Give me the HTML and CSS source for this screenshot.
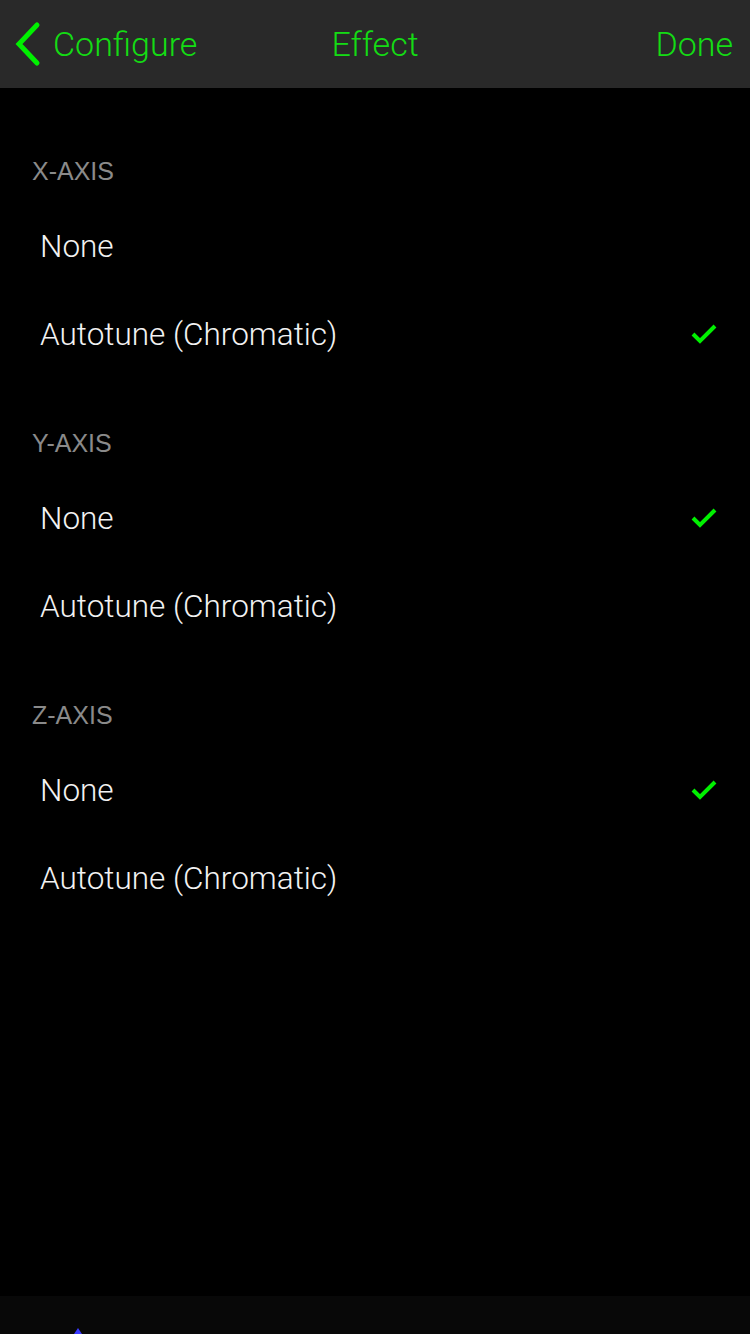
FILE: index.html
```html
<!DOCTYPE html>
<html>
<head>
<meta charset="utf-8">
<link rel="stylesheet" href="styles.css">
</head>
<body>
<div class="screen">
  <header class="navbar">
    <div class="nav-left">
      <svg class="chevron" width="28" height="46" viewBox="0 0 28 46"><path d="M23 4 L5 23 L23 42" fill="none" stroke="#00f000" stroke-width="5" stroke-linecap="round" stroke-linejoin="miter"/></svg>
      <span class="nav-text">Configure</span>
    </div>
    <div class="nav-title">Effect</div>
    <div class="nav-right">Done</div>
  </header>
  <main class="content">
    <section class="section first">
      <div class="section-header">X-AXIS</div>
      <div class="row"><span>None</span></div>
      <div class="row"><span>Autotune (Chromatic)</span><svg class="check" width="28" height="22" viewBox="0 0 28 22"><path d="M3 11 L10 18 L25 3" fill="none" stroke="#00f000" stroke-width="4"/></svg></div>
    </section>
    <section class="section">
      <div class="section-header">Y-AXIS</div>
      <div class="row"><span>None</span><svg class="check" width="28" height="22" viewBox="0 0 28 22"><path d="M3 11 L10 18 L25 3" fill="none" stroke="#00f000" stroke-width="4"/></svg></div>
      <div class="row"><span>Autotune (Chromatic)</span></div>
    </section>
    <section class="section">
      <div class="section-header">Z-AXIS</div>
      <div class="row"><span>None</span><svg class="check" width="28" height="22" viewBox="0 0 28 22"><path d="M3 11 L10 18 L25 3" fill="none" stroke="#00f000" stroke-width="4"/></svg></div>
      <div class="row"><span>Autotune (Chromatic)</span></div>
    </section>
  </main>
  <footer class="tabbar">
    <span class="tab-icon"></span>
  </footer>
</div>
</body>
</html>
```
FILE: styles.css
```css
* { box-sizing: border-box; }
html, body { margin: 0; padding: 0; background: #000; }
body { font-family: "Helvetica Neue", "Roboto Light", Roboto, "Liberation Sans", sans-serif; font-weight: 300; }
.screen { width: 750px; height: 1334px; display: flex; flex-direction: column; background: #000; overflow: hidden; }
.navbar { height: 89px; flex: none; background: #292929; border-bottom: 1px solid #000; display: flex; align-items: center; justify-content: space-between; padding: 0 17px 0 14px; color: #14dc14; font-size: 34px; position: relative; }
.nav-left { display: flex; align-items: center; gap: 11px; }
.chevron { display: block; }
.nav-title { position: absolute; left: 0; right: 0; text-align: center; pointer-events: none; }
.content { flex: 1; }
.section { padding-top: 96px; }
.section.first { padding-top: 113px; }
.section-header { color: #8a8a8a; font-family: "Liberation Sans", Arial, sans-serif; font-size: 25px; font-weight: 400; padding-left: 32px; margin-top: -45px; height: 45px; line-height: 28px; }
.row { height: 88px; display: flex; align-items: center; justify-content: space-between; padding: 0 32px 0 40px; color: #f2f2f2; font-size: 31.5px; }
.check { display: block; }
.tabbar { height: 38px; flex: none; background: #080808; position: relative; }
.tab-icon { position: absolute; left: 74px; top: 32px; width: 0; height: 0; border-left: 4px solid transparent; border-right: 4px solid transparent; border-bottom: 6px solid #3a3aff; }
```
